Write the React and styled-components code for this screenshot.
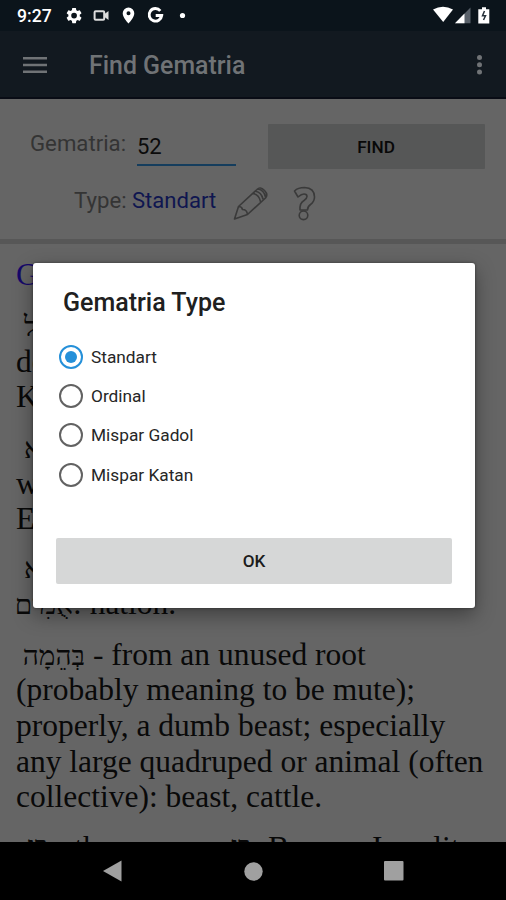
import React from "react";
import styled, { createGlobalStyle } from "styled-components";

const Global = createGlobalStyle`
  * { box-sizing: border-box; }
  body { margin: 0; background: #656565; }
`;
const Screen = styled.div`
  width: 506px; height: 900px; display: flex; flex-direction: column;
  position: relative; overflow: hidden; background: #656565;
  font-family: Roboto, sans-serif;
`;
const StatusBar = styled.div`
  height: 31px; flex: none; background: #0b141b; color: #fff;
  display: flex; align-items: center; justify-content: space-between; padding: 1px 14px 0 17px;
`;
const StatusGroup = styled.div`display: flex; align-items: center;`;
const Clock = styled.span`
  width: 49px; font-size: 17.6px; font-weight: 500; line-height: 30px; white-space: nowrap;
`;
const StatusIcons = styled.svg`display: block; flex: none;`;
const AppBar = styled.header`
  height: 68px; flex: none; background: #121920; border-bottom: 2px solid #090c15;
  display: flex; align-items: center; padding: 2px 23px 0 22px; color: #707376;
`;
const Title = styled.h1`
  margin: 0 auto 0 42px; padding-top: 2px; font-size: 24.9px; font-weight: 500; line-height: 32px;
`;
const Form = styled.section`
  height: 145px; flex: none; border-bottom: 5px solid #575757; color: #343434;
  padding-top: 25px; display: flex; flex-direction: column;
`;
const FormRow = styled.div`
  display: flex; height: ${(p) => p.$h}px; padding-left: ${(p) => p.$pad}px;
`;
const Label = styled.label`
  font-size: 22.2px; line-height: 26px; padding-top: ${(p) => p.$top}px;
  width: ${(p) => p.$w}px; white-space: nowrap;
`;
const Input = styled.div`
  width: 99px; height: 42px; border-bottom: 2px solid #153d5d; color: #0b0b0b;
  font-size: 22px; line-height: 26px; padding-top: 10px;
`;
const FindButton = styled.button`
  width: 217px; height: 45px; margin: 0 0 0 32px; padding: 0 1px 0 0; border: 0; border-radius: 1px;
  background: #565757; color: #080808; font: 500 17.2px Roboto, sans-serif;
`;
const Value = styled.span`
  width: 101px; padding-top: 12px; font-size: 22.1px; line-height: 26px; color: #0f1650;
`;
const FormIcon = styled.svg`
  display: block; margin-left: ${(p) => p.$gap}px; margin-top: 9px; flex: none;
  fill: none; stroke: #3a3a3a; stroke-width: 1.6; stroke-linejoin: round; stroke-linecap: round;
`;
const Results = styled.main`
  flex: 1; min-height: 0; overflow: hidden; padding: 13px 16px 0 16px;
  font-family: "Liberation Serif", serif; font-size: 31.5px; color: #090909;
`;
const ResultHeading = styled.div`height: 51px; line-height: 36px; color: #16086a;`;
const Entry = styled.div`
  height: ${(p) => p.$h}px; line-height: 35.7px;
`;
const Line = styled.div`
  height: 35.7px; white-space: pre; padding-left: ${(p) => (p.$first ? 8 : 0)}px;
`;
const Hebrew = styled.bdi`
  display: inline-block; width: ${(p) => (p.$w ? p.$w + "px" : "auto")};
  font-family: "Liberation Serif", serif; font-size: 28px; line-height: 30px;
  vertical-align: ${(p) => p.$raise || 0}px;
`;
const NavBar = styled.nav`
  height: 58px; flex: none; background: #000; display: flex; align-items: center;
  justify-content: space-between; padding: 0 102px;
`;
const Dialog = styled.div`
  position: absolute; left: 33px; top: 263px; width: 442px; height: 345px;
  background: #fff; border-radius: 3px; box-shadow: 0 7px 20px rgba(0,0,0,.38), 0 0 3px rgba(0,0,0,.45);
  padding: 24px 23px; display: flex; flex-direction: column;
`;
const DialogTitle = styled.h2`
  margin: 0 0 18px 7px; font-size: 25px; line-height: 32px; font-weight: 500; color: #202020;
`;
const Option = styled.label`
  display: flex; align-items: center; height: 39.4px; padding-left: 3px; gap: 8px;
  font-size: 17.3px; color: #262626;
`;
const Radio = styled.span`
  width: 24px; height: 24px; border-radius: 50%; border: 2px solid ${(p) => (p.$on ? "#2590d9" : "#626262")};
  display: grid; place-items: center; flex: none;
  &::after { content: ""; width: 12px; height: 12px; border-radius: 50%;
    background: ${(p) => (p.$on ? "#2590d9" : "transparent")}; }
`;
const OkButton = styled.button`
  margin: auto 0 0; height: 46px; flex: none; border: 0; border-radius: 2px; padding: 0;
  background: #d6d7d7; color: #1c1c1c; font: 500 17.2px Roboto, sans-serif;
`;

const types = ["Standart", "Ordinal", "Mispar Gadol", "Mispar Katan"];

function LeftStatus() {
  return (
    <StatusIcons width="130" height="20" viewBox="66 6 130 20">
      <g transform="translate(64.6 6.1) scale(.79)" fill="#fff">
        <path d="M19.14 12.94c.04-.3.06-.61.06-.94 0-.32-.02-.64-.07-.94l2.03-1.58a.49.49 0 0 0 .12-.61l-1.92-3.32a.49.49 0 0 0-.59-.22l-2.39.96c-.5-.38-1.03-.7-1.62-.94l-.36-2.54a.48.48 0 0 0-.48-.41h-3.84c-.24 0-.43.17-.47.41l-.36 2.54c-.59.24-1.13.57-1.62.94l-2.39-.96a.48.48 0 0 0-.59.22L2.74 8.87a.47.47 0 0 0 .12.61l2.03 1.58c-.05.3-.09.63-.09.94s.02.64.07.94l-2.03 1.58a.49.49 0 0 0-.12.61l1.92 3.32c.12.22.37.29.59.22l2.39-.96c.5.38 1.03.7 1.62.94l.36 2.54c.05.24.24.41.48.41h3.84c.24 0 .44-.17.47-.41l.36-2.54c.59-.24 1.13-.56 1.62-.94l2.39.96c.22.08.47 0 .59-.22l1.92-3.32a.47.47 0 0 0-.12-.61l-2.01-1.58zM12 15.6A3.6 3.6 0 1 1 12 8.4a3.6 3.6 0 0 1 0 7.2z" />
      </g>
      <rect x="94.6" y="11.2" width="9.6" height="8.6" rx="1" fill="none" stroke="#ddd" strokeWidth="2" />
      <path d="M104.500 14l4-3v9l-4-3z" fill="#ddd" />
      <path d="M128.500 7.500a5.800 5.800 0 0 0-5.800 5.800c0 4.300 5.800 10.300 5.800 10.300s5.800-6 5.800-10.300a5.800 5.800 0 0 0-5.800-5.800zm0 3.700a2 2 0 1 1 0 4 2 2 0 0 1 0-4z" fill="#fff" />
      <path d="M160.300 10.800a6.300 6.300 0 1 0 1.400 4.700h-6" fill="none" stroke="#fff" strokeWidth="2.900" />
      <circle cx="182.500" cy="15.500" r="2.600" fill="#fff" />
    </StatusIcons>
  );
}

function RightStatus() {
  return (
    <StatusIcons width="60" height="20" viewBox="432 6 60 20">
      <path d="M433 9.500Q443 4 453 9.500L443.200 22z" fill="#fff" />
      <path d="M470.500 7.500v15.700H455z" fill="#59616a" />
      <path d="M464.500 13.500v9.700H455z" fill="#fff" />
      <path d="M482 7.200h4v2h3.300v14.300h-11V9.200h3.700z" fill="#fff" />
      <path d="M484.500 11l-2 4.800h3L483.500 20" fill="none" stroke="#26313a" strokeWidth="1.500" />
    </StatusIcons>
  );
}

export default function App() {
  return (
    <Screen>
      <Global />
      <StatusBar>
        <StatusGroup>
          <Clock>9:27</Clock>
          <LeftStatus />
        </StatusGroup>
        <RightStatus />
      </StatusBar>
      <AppBar>
        <svg width="25" height="18" viewBox="0 0 25 18" fill="currentColor">
          <path d="M1 1h24v2.500H1zM1 7.800h24v2.500H1zM1 14.500h24V17H1z" />
        </svg>
        <Title>Find Gematria</Title>
        <svg width="7" height="20" viewBox="0 0 7 20" fill="currentColor">
          <circle cx="3.500" cy="2.500" r="2.500" /><circle cx="3.500" cy="9.800" r="2.500" /><circle cx="3.500" cy="17.100" r="2.500" />
        </svg>
      </AppBar>
      <Form>
        <FormRow $h={51} $pad={30}>
          <Label $top={6} $w={107}>Gematria:</Label>
          <Input>52</Input>
          <FindButton>FIND</FindButton>
        </FormRow>
        <FormRow $h={60} $pad={74}>
          <Label $top={12} $w={58}>Type:</Label>
          <Value>Standart</Value>
          <FormIcon $gap={0} width="36" height="38" viewBox="233 184 36 38">
            <path d="M234.500 219l4-12.500 18.500-17q3-3.500 7.500 1 4 4 1 7.500L247.500 214.500zM238.500 206.500q3.500 0 4 3 4.500 0 5 5M253 193.500q6 1 7.500 8M255.500 191.200q6 1 7.500 8M258 189q6 1 7.500 8" />
          </FormIcon>
          <FormIcon $gap={24} width="24" height="38" viewBox="293 184 24 38">
            <path d="M294.500 191q3.500-3.500 10-3.500 10 .5 10 9.500 0 4.500-4 7.500-3 2-3 5.500h-7.500q-.5-7 4-9.500 3-2 3-4 0-2.500-3-2.500-2.500 0-6 3z" />
            <circle cx="303.500" cy="215.300" r="4.300" />
          </FormIcon>
        </FormRow>
      </Form>
      <Results>
        <ResultHeading>Gematria: 52</ResultHeading>
        <Entry $h={122}>
          <Line $first><Hebrew>יהואֵל</Hebrew> - from an unused root;</Line>
          <Line>dog; a male prostitute.</Line>
          <Line>Kaleb</Line>
        </Entry>
        <Entry $h={120}>
          <Line $first><Hebrew>אבא</Hebrew> - the same as</Line>
          <Line>with; a name.</Line>
          <Line>Elihu</Line>
        </Entry>
        <Entry $h={86.5}>
          <Line $first><Hebrew>אֻמָּא</Hebrew> - a collection</Line>
          <Line><Hebrew $w={57}>אֻמִּים</Hebrew>: nation.</Line>
        </Entry>
        <Entry $h={193.5}>
          <Line $first><Hebrew $w={61}>בְּהֵמָה</Hebrew> - from an unused root</Line>
          <Line>(probably meaning to be mute);</Line>
          <Line>properly, a dumb beast; especially</Line>
          <Line>any large quadruped or animal (often</Line>
          <Line>collective): beast, cattle.</Line>
        </Entry>
        <Entry $h={36}>
          <Line $first><Hebrew $w={24} $raise={3}>בֵּן</Hebrew> - the same as <Hebrew $w={24} $raise={3}>בֵּן</Hebrew>: Ben, an Israelite</Line>
        </Entry>
      </Results>
      <NavBar>
        <svg width="20" height="22" viewBox="0 0 20 22"><path d="M1 11L19.500 .5v21z" fill="#a0a0a0" /></svg>
        <svg width="19" height="19" viewBox="0 0 19 19"><circle cx="9.500" cy="9.500" r="9.200" fill="#a0a0a0" /></svg>
        <svg width="20" height="20" viewBox="0 0 20 20"><rect width="19.500" height="19.500" rx="1" fill="#a0a0a0" /></svg>
      </NavBar>
      <Dialog role="dialog">
        <DialogTitle>Gematria Type</DialogTitle>
        {types.map((t, i) => (
          <Option key={t}><Radio $on={i === 0} />{t}</Option>
        ))}
        <OkButton>OK</OkButton>
      </Dialog>
    </Screen>
  );
}
